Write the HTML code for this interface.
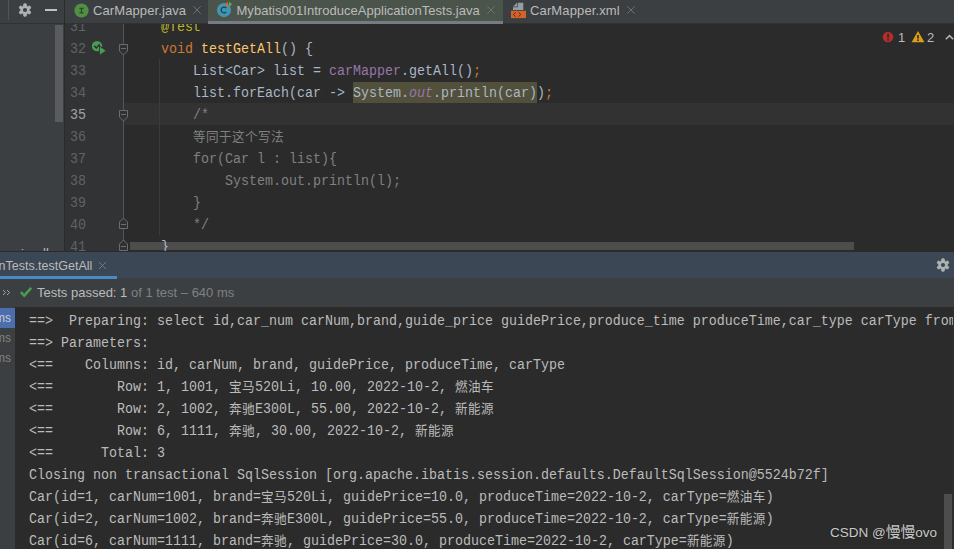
<!DOCTYPE html>
<html><head><meta charset="utf-8">
<style>
*{box-sizing:border-box;margin:0;padding:0}
html,body{width:954px;height:549px;overflow:hidden;background:#2b2b2b}
body{position:relative;font-family:"Liberation Sans","Noto Sans CJK SC",sans-serif;font-size:13px;color:#bbbbbb}
.abs{position:absolute}
#leftpanel{left:0;top:0;width:64px;height:251px;background:#3c3f41}
#lefthead{left:0;top:0;width:64px;height:24px;background:#3c3f41;border-bottom:1px solid #323232}
#tabbar{left:65px;top:0;width:889px;height:24px;background:#3c3f41;border-bottom:1px solid #323232}
.tab{position:absolute;top:0;height:23px;white-space:nowrap;font-size:13px;line-height:22px;color:#bbbbbb}
#editor{left:65px;top:24px;width:889px;height:227px;background:#2b2b2b;overflow:hidden}
#gutter{left:0;top:0;width:59px;height:228px;background:#313335;border-right:1px solid #555555}
.mono{font-family:"Liberation Mono","Noto Sans CJK SC",monospace;font-size:13.333px;white-space:pre;transform:scaleY(1.1);transform-origin:0 50%}
.cjk{font-family:"Noto Sans CJK SC",sans-serif;font-size:12.6px;letter-spacing:0.4px;line-height:0;display:inline-block;transform:scaleY(0.909);transform-origin:50% 50%}
.ln{position:absolute;height:22px;line-height:22px;color:#606366}
.cl{position:absolute;height:22px;line-height:22px;color:#a9b7c6}
.k{color:#cc7832}.f{color:#ffc66d}.v{color:#9876aa}.c{color:#808080}.a{color:#bbb529}
.hl{}
#panelhead{left:0;top:252px;width:954px;height:26px;background:#3b4754;z-index:3}
#toolbar{left:0;top:278px;width:954px;height:29px;background:#3c3f41}
#console{left:0;top:307px;width:954px;height:242px;background:#2b2b2b;overflow:hidden}
#tree{left:0;top:307px;width:15px;height:242px;background:#3c3f41;overflow:hidden}
.con{position:absolute;left:29px;height:22px;line-height:22px;color:#bbbbbb}
.ui{position:absolute;white-space:nowrap}
</style></head><body>
<div class="abs" id="leftpanel">
<div class="abs" style="left:55px;top:25px;width:8px;height:97px;background:#595b5d"></div>
<div class="abs" style="left:0;top:246px;width:55px;height:5px;overflow:hidden"><div class="ui" style="left:21px;top:1px;font-size:13px;line-height:14px;color:#bbbbbb;letter-spacing:0">i</div><div class="ui" style="left:43px;top:0px;font-size:13px;line-height:14px;color:#bbbbbb">ll</div></div>
</div>
<div class="abs" id="lefthead">
<div class="abs" style="left:8px;top:0;width:1px;height:20px;background:#555350"></div>
<svg class="abs" style="left:18px;top:3px" width="14" height="14" viewBox="0 0 14 14"><path d="M8.75 3.29 L8.10 0.80 L5.90 0.80 L5.25 3.29 L4.66 3.63 L2.18 2.95 L1.08 4.85 L2.91 6.66 L2.91 7.34 L1.08 9.15 L2.18 11.05 L4.66 10.37 L5.25 10.71 L5.90 13.20 L8.10 13.20 L8.75 10.71 L9.34 10.37 L11.82 11.05 L12.92 9.15 L11.09 7.34 L11.09 6.66 L12.92 4.85 L11.82 2.95 L9.34 3.63 Z" fill="#afb1b3" stroke="#afb1b3" stroke-width="0.8" stroke-linejoin="round"/><circle cx="7" cy="7" r="2.1" fill="#3c3f41"/></svg>
<div class="abs" style="left:45px;top:9px;width:12px;height:2px;background:#c0c0c0"></div>
</div>
<div class="abs" style="left:64px;top:0;width:1px;height:24px;background:#2b2b2b"></div>
<div class="abs" id="tabbar">
<div class="abs" style="left:143px;top:0;width:295px;height:23px;background:#4b544a"></div>
<div class="abs" style="left:143px;top:21px;width:295px;height:3px;background:#767c86"></div>
<svg class="abs" style="left:8.5px;top:2.5px" width="15" height="15" viewBox="0 0 15 15"><circle cx="7.5" cy="7.5" r="7.1" fill="#528f45"/><path d="M5.4 5.3 H9.6 M5.4 9.9 H9.6 M7.5 5.3 V9.9" stroke="#274d23" stroke-width="1.3" fill="none"/></svg>
<div class="tab" style="left:28px;letter-spacing:0.1px">CarMapper.java</div>
<svg class="abs" style="left:128px;top:6px" width="8" height="8" viewBox="0 0 8 8"><path d="M0.3 0.3 L7.7 7.7 M7.7 0.3 L0.3 7.7" stroke="#6e7072" stroke-width="1"/></svg>
<svg class="abs" style="left:151px;top:0px" width="18" height="19" viewBox="0 0 18 19"><circle cx="8" cy="10.1" r="7.1" fill="#4195b0"/><path d="M10.3 8.1 A2.9 2.9 0 1 0 10.3 11.9" fill="none" stroke="#23404d" stroke-width="1.3"/><path d="M9.1 4.3 L12 1.8 V6.8 Z" fill="#e8602c"/><path d="M13 1.8 L16.2 4.3 L13 6.8 Z" fill="#5fb13c"/></svg>
<div class="tab" style="left:171.5px;letter-spacing:0.03px">Mybatis001IntroduceApplicationTests.java</div>
<svg class="abs" style="left:422px;top:6px" width="8" height="8" viewBox="0 0 8 8"><path d="M0.3 0.3 L7.7 7.7 M7.7 0.3 L0.3 7.7" stroke="#6c756c" stroke-width="1"/></svg>
<svg class="abs" style="left:445px;top:2px" width="17" height="17" viewBox="0 0 17 17"><path d="M7.7 0.8 H13.3 V7.9 H3 V5.2 H7.7 Z" fill="#939da5"/><path d="M3 4.5 L7 0.8 V4.5 Z" fill="#939da5"/><rect x="1" y="8.8" width="15" height="7.3" fill="#d4632a"/><path d="M5.6 10.4 L3.4 12.5 L5.6 14.6 M8.6 10.4 L10.8 12.5 L8.6 14.6" stroke="#5a2a12" stroke-width="1" fill="none"/></svg>
<div class="tab" style="left:465px;letter-spacing:0.13px">CarMapper.xml</div>
<svg class="abs" style="left:562px;top:6px" width="8" height="8" viewBox="0 0 8 8"><path d="M0.3 0.3 L7.7 7.7 M7.7 0.3 L0.3 7.7" stroke="#6e7072" stroke-width="1"/></svg>
</div>
<div class="abs" id="editor">
<div class="abs" style="left:0;top:79px;width:889px;height:22px;background:#323232"></div>
<div class="abs" id="gutter"></div>
<div class="abs" style="left:94px;top:35px;width:1px;height:176px;background:#3b3b3b"></div>
<div class="abs" style="left:65px;top:218px;width:724px;height:8px;background:#4d4d4d"></div>
<div class="abs" style="left:288px;top:58px;width:184px;height:21px;background:#52503a"></div>
<div class="ln mono" style="top:-7px;left:5px;color:#606366">31</div>
<div class="cl mono" style="top:-7px;left:64px">    <span class="a">@Test</span></div>
<div class="ln mono" style="top:15px;left:5px;color:#606366">32</div>
<div class="cl mono" style="top:15px;left:64px">    <span class="k">void </span><span class="f">testGetAll</span>() {</div>
<div class="ln mono" style="top:37px;left:5px;color:#606366">33</div>
<div class="cl mono" style="top:37px;left:64px">        List&lt;Car&gt; list = <span class="v">carMapper</span>.getAll()<span class="k">;</span></div>
<div class="ln mono" style="top:59px;left:5px;color:#606366">34</div>
<div class="cl mono" style="top:59px;left:64px">        list.forEach(car -&gt; <span class="hl">System.<i class="v">out</i>.println(car)</span>)<span class="k">;</span></div>
<div class="ln mono" style="top:81px;left:5px;color:#a4a3a3">35</div>
<div class="cl mono" style="top:81px;left:64px">        <span class="c">/*</span></div>
<div class="ln mono" style="top:103px;left:5px;color:#606366">36</div>
<div class="cl mono" style="top:103px;left:64px">        <span class="c"><span class="cjk">等同于这个写法</span></span></div>
<div class="ln mono" style="top:125px;left:5px;color:#606366">37</div>
<div class="cl mono" style="top:125px;left:64px">        <span class="c">for(Car l : list){</span></div>
<div class="ln mono" style="top:147px;left:5px;color:#606366">38</div>
<div class="cl mono" style="top:147px;left:64px">        <span class="c">    System.out.println(l);</span></div>
<div class="ln mono" style="top:169px;left:5px;color:#606366">39</div>
<div class="cl mono" style="top:169px;left:64px">        <span class="c">}</span></div>
<div class="ln mono" style="top:191px;left:5px;color:#606366">40</div>
<div class="cl mono" style="top:191px;left:64px">        <span class="c">*/</span></div>
<div class="ln mono" style="top:213px;left:5px;color:#606366">41</div>
<div class="cl mono" style="top:213px;left:64px">    }</div>
<svg class="abs" style="left:53px;top:19px" width="11" height="13" viewBox="0 0 11 13"><path d="M1.5 1.5 H9.5 V8 L5.5 12 L1.5 8 Z" fill="#2f3133" stroke="#6a6c6e" stroke-width="1"/><rect x="3" y="5" width="5" height="1" fill="#6c6e70"/></svg>
<svg class="abs" style="left:53px;top:85px" width="11" height="13" viewBox="0 0 11 13"><path d="M1.5 1.5 H9.5 V8 L5.5 12 L1.5 8 Z" fill="#2f3133" stroke="#6a6c6e" stroke-width="1"/><rect x="3" y="5" width="5" height="1" fill="#6c6e70"/></svg>
<svg class="abs" style="left:53px;top:193px" width="11" height="13" viewBox="0 0 11 13"><path d="M1.5 11.5 H9.5 V5 L5.5 1 L1.5 5 Z" fill="#2f3133" stroke="#6a6c6e" stroke-width="1"/><rect x="3" y="7" width="5" height="1" fill="#6c6e70"/></svg>
<svg class="abs" style="left:53px;top:215px" width="11" height="13" viewBox="0 0 11 13"><path d="M1.5 11.5 H9.5 V5 L5.5 1 L1.5 5 Z" fill="#2f3133" stroke="#6a6c6e" stroke-width="1"/><rect x="3" y="7" width="5" height="1" fill="#6c6e70"/></svg>
<svg class="abs" style="left:27px;top:16px" width="16" height="16" viewBox="0 0 16 16">
<circle cx="5.05" cy="6.1" r="5.2" fill="#499c54"/>
<path d="M2.3 5.9 L4.4 8 L7.6 4.3" fill="none" stroke="#2f3133" stroke-width="1.5"/>
<path d="M7.9 6.7 L13.7 10.65 L7.9 14.6 Z" fill="#499c54" stroke="#313335" stroke-width="1.8" paint-order="stroke"/>
</svg>
 <svg class="abs" style="left:816px;top:6px" width="73" height="14" viewBox="0 0 73 14">
<circle cx="7" cy="7" r="5.3" fill="#b42c2c"/><rect x="6.2" y="3.6" width="1.8" height="4.2" fill="#3a2a2a"/><rect x="6.2" y="8.8" width="1.8" height="1.8" fill="#3a2a2a"/>
<path d="M37 1 L43.4 12.2 H30.6 Z" fill="#d9a016"/><rect x="36.1" y="5" width="1.8" height="3.6" fill="#3a3320"/><rect x="36.1" y="9.4" width="1.8" height="1.6" fill="#3a3320"/>
<path d="M64.8 9.3 L68.5 5.6 L72.2 9.3" fill="none" stroke="#afb1b3" stroke-width="1.6"/>
</svg>
<div class="abs" style="left:833px;top:6px;font-size:13px;line-height:16px;color:#bbbbbb">1</div>
<div class="abs" style="left:862px;top:6px;font-size:13px;line-height:16px;color:#bbbbbb">2</div>
</div>
<div class="abs" id="panelhead">
<div class="ui" style="left:-1.5px;top:0.5px;line-height:26px;font-size:12.5px;letter-spacing:0;color:#bbbbbb">nTests.testGetAll</div>
<svg class="abs" style="left:98px;top:9px" width="9" height="9" viewBox="0 0 9 9"><path d="M1 1 L8 8 M8 1 L1 8" stroke="#6f7a85" stroke-width="1"/></svg>
<div class="abs" style="left:0;top:24px;width:117px;height:3px;background:#4a88c7;z-index:3"></div>
<svg class="abs" style="left:936px;top:6px" width="14" height="14" viewBox="0 0 14 14"><path d="M8.75 3.29 L8.10 0.80 L5.90 0.80 L5.25 3.29 L4.66 3.63 L2.18 2.95 L1.08 4.85 L2.91 6.66 L2.91 7.34 L1.08 9.15 L2.18 11.05 L4.66 10.37 L5.25 10.71 L5.90 13.20 L8.10 13.20 L8.75 10.71 L9.34 10.37 L11.82 11.05 L12.92 9.15 L11.09 7.34 L11.09 6.66 L12.92 4.85 L11.82 2.95 L9.34 3.63 Z" fill="#afb1b3" stroke="#afb1b3" stroke-width="0.8" stroke-linejoin="round"/><circle cx="7" cy="7" r="2.1" fill="#3b4754"/></svg>
</div>
<div class="abs" id="toolbar">
<svg class="abs" style="left:2px;top:11.3px" width="9" height="7" viewBox="0 0 9 7"><path d="M1 1 L3.6 3.5 L1 6 M5 1 L7.6 3.5 L5 6" fill="none" stroke="#a3a5a7" stroke-width="1"/></svg>
<svg class="abs" style="left:19px;top:8px" width="14" height="12" viewBox="0 0 14 12"><path d="M1.8 6.2 L5.2 9.6 L12.2 1.8" fill="none" stroke="#499c54" stroke-width="2.6"/></svg>
<div class="ui" style="left:37px;top:0;line-height:29px;font-size:13px;color:#bbbbbb">Tests passed: 1<span style="color:#808080"> of 1 test – 640 ms</span></div>
</div>
<div class="abs" id="console">
<div class="con mono" style="top:4px">==&gt;  Preparing: select id,car_num carNum,brand,guide_price guidePrice,produce_time produceTime,car_type carType from</div>
<div class="con mono" style="top:26px">==&gt; Parameters: </div>
<div class="con mono" style="top:48px">&lt;==    Columns: id, carNum, brand, guidePrice, produceTime, carType</div>
<div class="con mono" style="top:70px">&lt;==        Row: 1, 1001, <span class="cjk">宝马</span>520Li, 10.00, 2022-10-2, <span class="cjk">燃油车</span></div>
<div class="con mono" style="top:92px">&lt;==        Row: 2, 1002, <span class="cjk">奔驰</span>E300L, 55.00, 2022-10-2, <span class="cjk">新能源</span></div>
<div class="con mono" style="top:114px">&lt;==        Row: 6, 1111, <span class="cjk">奔驰</span>, 30.00, 2022-10-2, <span class="cjk">新能源</span></div>
<div class="con mono" style="top:136px">&lt;==      Total: 3</div>
<div class="con mono" style="top:158px">Closing non transactional SqlSession [org.apache.ibatis.session.defaults.DefaultSqlSession@5524b72f]</div>
<div class="con mono" style="top:180px">Car(id=1, carNum=1001, brand=<span class="cjk">宝马</span>520Li, guidePrice=10.0, produceTime=2022-10-2, carType=<span class="cjk">燃油车</span>)</div>
<div class="con mono" style="top:202px">Car(id=2, carNum=1002, brand=<span class="cjk">奔驰</span>E300L, guidePrice=55.0, produceTime=2022-10-2, carType=<span class="cjk">新能源</span>)</div>
<div class="con mono" style="top:224px">Car(id=6, carNum=1111, brand=<span class="cjk">奔驰</span>, guidePrice=30.0, produceTime=2022-10-2, carType=<span class="cjk">新能源</span>)</div>
<div class="abs" style="left:953px;top:0;width:1px;height:242px;background:#303030"></div>
<div class="abs" style="left:944px;top:187px;width:8px;height:60px;background:#4d4d4d"></div>
</div>
<div class="abs" id="tree">
<div class="abs" style="left:0;top:1px;width:15px;height:20px;background:#4b6eaf"></div>
<div class="ui" style="left:-5px;top:1px;font-size:12px;line-height:20px;color:#c8ccd2">ms</div>
<div class="ui" style="left:-5px;top:21px;font-size:12px;line-height:20px;color:#808285">ms</div>
<div class="ui" style="left:-5px;top:41px;font-size:12px;line-height:20px;color:#808285">ms</div>
</div>
<div class="ui" style="left:830px;top:524px;font-size:13.5px;line-height:18px;color:#c9c9c9;text-shadow:0 0 1px #222,0 0 1px #222">CSDN @<span style="font-family:'Noto Sans CJK SC',sans-serif;font-size:15px;line-height:0;letter-spacing:-0.2px">慢慢</span>ovo</div>
</body></html>
